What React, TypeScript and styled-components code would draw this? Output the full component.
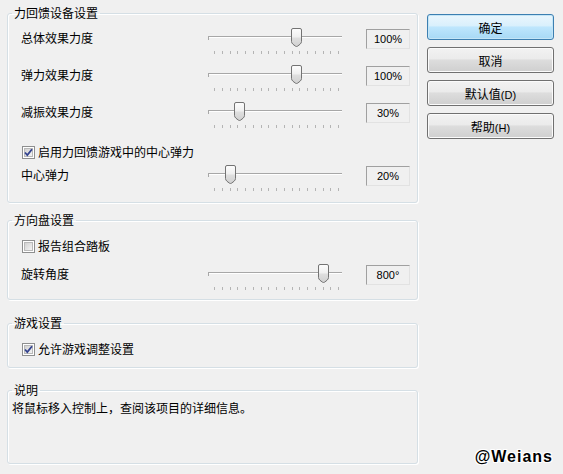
import styled, { createGlobalStyle } from 'styled-components';

const GlobalStyle = createGlobalStyle`
  html, body {
    margin: 0;
    padding: 0;
    width: 563px;
    height: 474px;
    overflow: hidden;
    background: #f0f0f0;
  }
  body {
    font-family: "Noto Sans CJK SC", "Noto Sans", sans-serif;
    font-size: 12px;
    color: #000;
  }
`;

const Page = styled.div`
  display: flex;
  height: 474px;
  background: #f0f0f0;
`;

const LeftCol = styled.div`
  width: 411px;
  margin-left: 7px;
  padding-top: 6px;
  display: flex;
  flex-direction: column;
`;

const RightCol = styled.div`
  width: 127px;
  margin-left: 9px;
  padding: 14px 0 8px;
  display: flex;
  flex-direction: column;
  gap: 7px;
`;

const GroupBox = styled.fieldset<{ $top: number }>`
  margin: ${(p) => p.$top}px 0 0;
  padding: 0;
  min-width: 0;
  border: 1px solid #d5dfe5;
  border-radius: 3px;
  box-shadow: inset 1px 1px 0 #fff, 1px 1px 0 #fff;
`;

const Legend = styled.legend`
  margin-left: 4px;
  padding: 0 2px;
  font-size: 12px;
  line-height: 14px;
`;

const GroupBody = styled.div<{ $pt?: number; $pb?: number; $pl?: number; $h?: number }>`
  padding: ${(p) => p.$pt ?? 0}px 6px ${(p) => p.$pb ?? 0}px ${(p) => p.$pl ?? 13}px;
  ${(p) => (p.$h ? `height: ${p.$h}px; box-sizing: border-box;` : '')}
`;

const SliderRow = styled.div`
  display: grid;
  grid-template-columns: 187px 134px 24px 44px;
  align-items: center;
  height: 37px;
`;

const RowLabel = styled.span`
  line-height: 16px;
  margin-top: -1px;
`;

const Slider = styled.div`
  position: relative;
  height: 37px;
  grid-column: 2;
`;

const Track = styled.div`
  position: absolute;
  left: 0;
  right: 0;
  top: 16px;
  height: 1px;
  background: #a7a7a7;
  border-bottom: 1px solid #fff;

  &::before {
    content: '';
    position: absolute;
    left: 0;
    top: 0;
    width: 1px;
    height: 4px;
    background: #a7a7a7;
  }
`;

const Ticks = styled.div`
  position: absolute;
  left: 6px;
  right: 3px;
  top: 31px;
  display: flex;
  justify-content: space-between;
`;

const Tick = styled.span`
  width: 1px;
  height: 3px;
  background: #b4b4b4;
`;

const ThumbWrap = styled.div`
  position: absolute;
  top: 8px;
  width: 11px;
  height: 19px;
`;

const ValueBox = styled.div`
  grid-column: 4;
  height: 20px;
  box-sizing: border-box;
  border: 1px solid;
  border-color: #a0a0a0 #e2e2e2 #e2e2e2 #a0a0a0;
  font-family: "Liberation Sans", Arial, sans-serif;
  font-size: 11px;
  line-height: 18px;
  text-align: center;
  margin-top: 1px;
`;

const CheckRow = styled.label<{ $pt: number; $h: number }>`
  display: flex;
  align-items: flex-start;
  gap: 3px;
  padding-top: ${(p) => p.$pt}px;
  height: ${(p) => p.$h}px;
  box-sizing: border-box;
  line-height: 16px;
  margin-left: 1px;

  svg {
    margin-top: 2px;
    flex: none;
  }
`;

const InfoText = styled.div`
  line-height: 16px;
`;

const Button = styled.button<{ $default?: boolean }>`
  height: 26px;
  width: 127px;
  padding: 0;
  border-radius: 3px;
  font-family: "Noto Sans CJK SC", "Noto Sans", sans-serif;
  font-size: 12px;
  color: #000;
  border: 1px solid ${(p) => (p.$default ? '#3c7fb1' : '#707070')};
  background: ${(p) =>
    p.$default
      ? 'linear-gradient(#eaf6fd 0%, #d9f0fc 45%, #bee6fd 50%, #a7d9f5 100%)'
      : 'linear-gradient(#f2f2f2 0%, #ebebeb 45%, #dddddd 50%, #cfcfcf 100%)'};
  box-shadow: inset 0 0 0 1px ${(p) => (p.$default ? '#c4e5f6' : '#fbfbfb')};
`;

const Mnemonic = styled.span`
  font-family: "Liberation Sans", Arial, sans-serif;
  font-size: 11px;
`;

const Watermark = styled.div`
  margin-top: auto;
  align-self: flex-end;
  margin-right: 1px;
  font-family: "Liberation Sans", Arial, sans-serif;
  font-weight: bold;
  font-size: 16px;
  letter-spacing: 1px;
  line-height: 18px;
  color: #000;
  text-shadow: 1px 0 0 #fff, -1px 0 0 #fff, 0 1px 0 #fff, 0 -1px 0 #fff,
    1px 1px 0 #fff, -1px -1px 0 #fff, 1px -1px 0 #fff, -1px 1px 0 #fff;
`;

const Thumb = () => (
  <svg width="11" height="19" viewBox="0 0 11 19">
    <defs>
      <linearGradient id="thumbFill" x1="0" y1="0" x2="0" y2="1">
        <stop offset="0" stopColor="#fdfdfd" />
        <stop offset="0.45" stopColor="#f0f0f0" />
        <stop offset="0.55" stopColor="#dedede" />
        <stop offset="1" stopColor="#d0d0d0" />
      </linearGradient>
    </defs>
    <path
      d="M2 0.5 H9 Q10.5 0.5 10.5 2 V13.5 Q10.5 15 9 16.3 L6.5 18.2 Q5.5 18.8 4.5 18.2 L2 16.3 Q0.5 15 0.5 13.5 V2 Q0.5 0.5 2 0.5 Z"
      fill="url(#thumbFill)"
      stroke="#737373"
    />
  </svg>
);

const CheckBox = ({ checked }: { checked: boolean }) => (
  <svg width="13" height="13" viewBox="0 0 13 13">
    <defs>
      <linearGradient id="cbFill" x1="0" y1="0" x2="1" y2="1">
        <stop offset="0" stopColor="#cfcfcf" />
        <stop offset="1" stopColor="#f6f6f6" />
      </linearGradient>
    </defs>
    <rect x="0.5" y="0.5" width="12" height="12" fill="#fff" stroke="#8e8f8f" />
    <rect x="2.5" y="2.5" width="8" height="8" fill="url(#cbFill)" stroke="#b9b9b9" />
    {checked && (
      <path d="M3 6.5 L5.3 9 L10 3.2" fill="none" stroke="#33438f" strokeWidth="1.8" />
    )}
  </svg>
);

const SliderControl = ({ value }: { value: number }) => (
  <Slider>
    <Track />
    <Ticks>
      {Array.from({ length: 17 }, (_, i) => (
        <Tick key={i} />
      ))}
    </Ticks>
    <ThumbWrap style={{ left: Math.round(value * 124) }}>
      <Thumb />
    </ThumbWrap>
  </Slider>
);

const Setting = ({ label, value, text }: { label: string; value: number; text: string }) => (
  <SliderRow>
    <RowLabel>{label}</RowLabel>
    <SliderControl value={value} />
    <ValueBox>{text}</ValueBox>
  </SliderRow>
);

const App = () => (
  <Page>
    <GlobalStyle />
    <LeftCol>
      <GroupBox $top={0}>
        <Legend>力回馈设备设置</Legend>
        <GroupBody $pb={8}>
          <Setting label="总体效果力度" value={0.67} text="100%" />
          <Setting label="弹力效果力度" value={0.67} text="100%" />
          <Setting label="减振效果力度" value={0.21} text="30%" />
          <CheckRow $pt={13} $h={26}>
            <CheckBox checked />
            启用力回馈游戏中的中心弹力
          </CheckRow>
          <Setting label="中心弹力" value={0.135} text="20%" />
        </GroupBody>
      </GroupBox>
      <GroupBox $top={10}>
        <Legend>方向盘设置</Legend>
        <GroupBody $pb={6}>
          <CheckRow $pt={11} $h={29}>
            <CheckBox checked={false} />
            报告组合踏板
          </CheckRow>
          <Setting label="旋转角度" value={0.885} text="800°" />
        </GroupBody>
      </GroupBox>
      <GroupBox $top={16}>
        <Legend>游戏设置</Legend>
        <GroupBody $pb={10}>
          <CheckRow $pt={11} $h={27}>
            <CheckBox checked />
            允许游戏调整设置
          </CheckRow>
        </GroupBody>
      </GroupBox>
      <GroupBox $top={15}>
        <Legend>说明</Legend>
        <GroupBody $pt={3} $pl={4} $h={66}>
          <InfoText>将鼠标移入控制上，查阅该项目的详细信息。</InfoText>
        </GroupBody>
      </GroupBox>
    </LeftCol>
    <RightCol>
      <Button $default>确定</Button>
      <Button>取消</Button>
      <Button>
        默认值<Mnemonic>(D)</Mnemonic>
      </Button>
      <Button>
        帮助<Mnemonic>(H)</Mnemonic>
      </Button>
      <Watermark>@Weians</Watermark>
    </RightCol>
  </Page>
);

export default App;
